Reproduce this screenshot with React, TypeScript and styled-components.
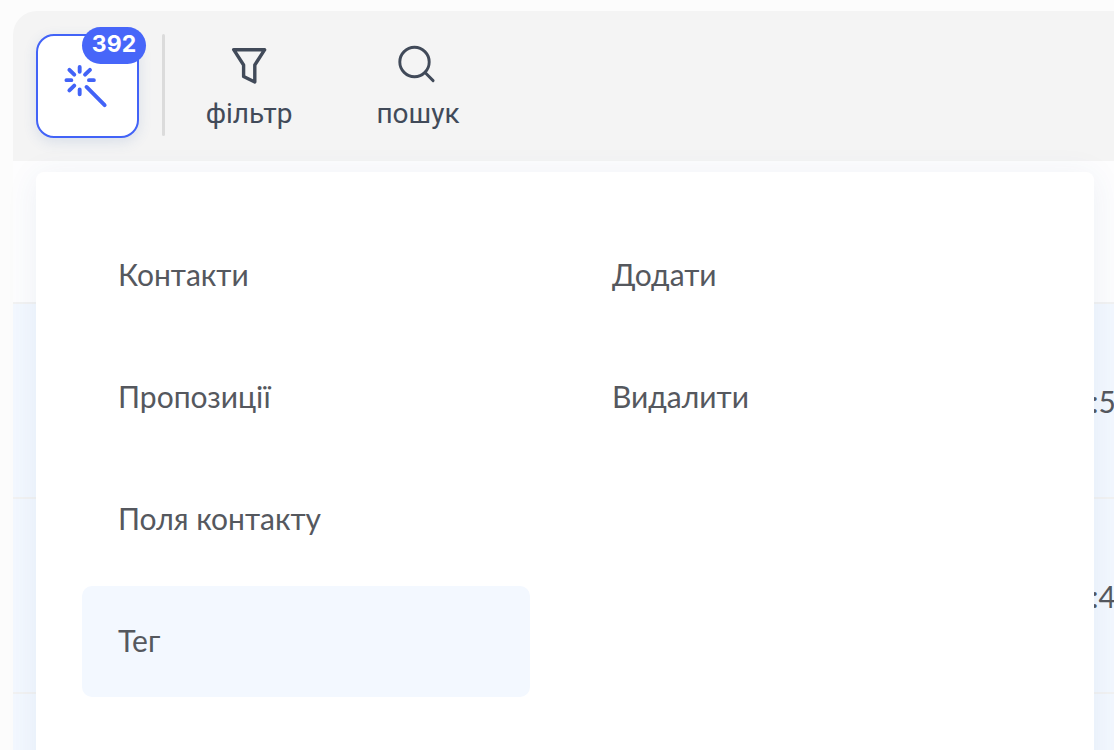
import React from "react";
import styled, { createGlobalStyle } from "styled-components";

const GlobalStyle = createGlobalStyle`
  *, *::before, *::after { box-sizing: border-box; }
  body { margin: 0; background: #fcfcfc; }
  button { font: inherit; border: 0; background: none; cursor: pointer; }
`;

const Page = styled.div`
  height: 100vh;
  overflow: hidden;
  padding: 11px 0 0 13px;
  font-family: Lato, sans-serif;
  font-size: 30px;
  line-height: 36px;
  color: #55585e;
`;

const Toolbar = styled.header`
  display: flex;
  align-items: flex-start;
  height: 150px;
  padding: 23px;
  background: #f4f4f4;
  border-radius: 24px 0 0 0;
`;

const ActionButton = styled.button`
  position: relative;
  display: flex;
  width: 103px;
  height: 104px;
  padding: 26px;
  background: #fff;
  border: 2px solid #4263f7;
  border-radius: 18px;
  color: #4263f7;
  box-shadow: 0 4px 14px rgba(60, 100, 170, 0.14);
`;

const Badge = styled.span`
  position: absolute;
  top: -9px;
  right: -9px;
  height: 37px;
  width: 64px;
  border-radius: 19px;
  background: #4766f9;
  color: #fff;
  font: 700 23px/34px Inter, sans-serif;
  text-align: center;
`;

const Divider = styled.div`
  width: 3px;
  height: 102px;
  margin: 0 31px 0 23px;
  border-radius: 2px;
  background: #dbdbdb;
`;

const ToolButton = styled.button`
  display: flex;
  flex-direction: column;
  align-items: center;
  gap: 12px;
  width: 106px;
  margin-right: 63px;
  padding: 10px 0 0;
  color: #414a59;
  font: 400 28px/36px Roboto, sans-serif;
`;

const Content = styled.main`
  position: relative;
`;

const Table = styled.table`
  width: 100%;
  table-layout: fixed;
  border-collapse: separate;
  border-spacing: 0;
`;

const HeadCell = styled.th<{ $narrow?: boolean }>`
  width: ${(p) => (p.$narrow ? "23px" : "auto")};
  height: 141px;
  padding: 0;
  background: #fdfdfe;
`;

const Cell = styled.td`
  height: 195px;
  padding: 0;
  border-top: 2px solid #f2f2f2;
  background: #f3f8ff;
  white-space: nowrap;
`;

const Menu = styled.nav`
  position: absolute;
  top: 11px;
  left: 23px;
  right: 20px;
  display: grid;
  grid-template-columns: 1fr 1fr;
  gap: 46px;
  min-height: 640px;
  padding: 48px 70px 48px 46px;
  background: #fff;
  border-radius: 8px;
  box-shadow: 0 4px 32px rgba(50, 90, 140, 0.08);
`;

const MenuColumn = styled.div`
  display: flex;
  flex-direction: column;
  gap: 11px;
`;

const MenuItem = styled.button<{ $active?: boolean }>`
  height: 111px;
  padding: 0 36px 4px;
  border-radius: 10px;
  text-align: left;
  color: inherit;
  && { background: ${(p) => (p.$active ? "#f3f8ff" : "transparent")}; }
`;

const WandIcon = () => (
  <svg width="48" height="48" viewBox="0 0 48 48" fill="none" stroke="currentColor" strokeWidth="4" strokeLinecap="round" aria-hidden="true">
    <path d="M16 4.500v5M16 27.500v5M2.500 18h5M25.500 18h5M5.500 7.500l5 5M26.500 7.500l-5 5M5.500 28.500l5-5M23 25l18.500 18.500" />
  </svg>
);

const FilterIcon = () => (
  <svg width="40" height="40" viewBox="0 0 40 40" fill="none" stroke="currentColor" strokeWidth="3.400" strokeLinejoin="round" aria-hidden="true">
    <path d="M4.700 5.700h31L25.800 21v17L14.600 32.500V21Z" />
  </svg>
);

const SearchIcon = () => (
  <svg width="40" height="40" viewBox="0 0 40 40" fill="none" stroke="currentColor" strokeWidth="2.900" strokeLinecap="round" aria-hidden="true">
    <circle cx="16.500" cy="18" r="14.700" />
    <path d="M27.300 28.800l7.800 7.800" />
  </svg>
);

const menuColumns = [
  ["Контакти", "Пропозиції", "Поля контакту", "Тег"],
  ["Додати", "Видалити"],
];
const rows = [":5", ":4", ""];

export default function App() {
  return (
    <Page>
      <GlobalStyle />
      <Toolbar>
        <ActionButton type="button">
          <WandIcon />
          <Badge>392</Badge>
        </ActionButton>
        <Divider />
        <ToolButton type="button">
          <FilterIcon />
          фільтр
        </ToolButton>
        <ToolButton type="button">
          <SearchIcon />
          пошук
        </ToolButton>
      </Toolbar>
      <Content>
        <Table>
          <thead>
            <tr>
              <HeadCell scope="col" />
              <HeadCell scope="col" $narrow />
            </tr>
          </thead>
          <tbody>
            {rows.map((time, i) => (
              <tr key={i}>
                <Cell />
                <Cell>{time}</Cell>
              </tr>
            ))}
          </tbody>
        </Table>
        <Menu>
          {menuColumns.map((items, i) => (
            <MenuColumn key={i}>
              {items.map((item) => (
                <MenuItem key={item} type="button" $active={item === "Тег"}>{item}</MenuItem>
              ))}
            </MenuColumn>
          ))}
        </Menu>
      </Content>
    </Page>
  );
}
